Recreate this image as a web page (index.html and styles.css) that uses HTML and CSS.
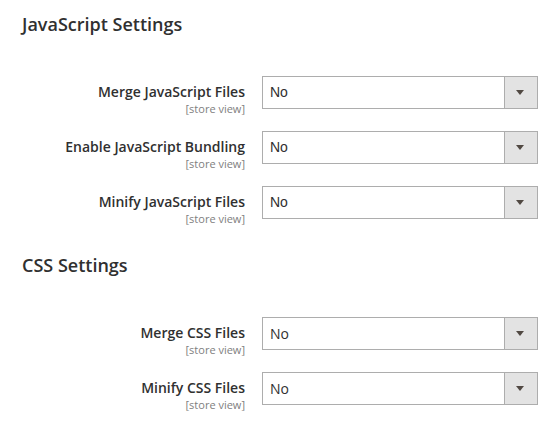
FILE: index.html
```
<!DOCTYPE html>
<html lang="en">
<head>
	<meta charset="UTF-8" />
	<meta name="viewport" content="width=device-width, initial-scale=1" />
	<title>Developer settings</title>
	<link rel="stylesheet" href="styles.css">
</head>
<body>
	<div class="section">
		<h2 class="section_title">JavaScript Settings</h2>
		<div class="row">
			<div class="label">
				<div class="label_text">Merge JavaScript Files</div>
				<div class="scope">[store view]</div>
			</div>
			<div class="select select--js">
				<span class="value">No</span>
				<span class="arrow"></span>
			</div>
		</div>
		<div class="row">
			<div class="label">
				<div class="label_text">Enable JavaScript Bundling</div>
				<div class="scope">[store view]</div>
			</div>
			<div class="select select--js">
				<span class="value">No</span>
				<span class="arrow"></span>
			</div>
		</div>
		<div class="row">
			<div class="label">
				<div class="label_text">Minify JavaScript Files</div>
				<div class="scope">[store view]</div>
			</div>
			<div class="select select--js">
				<span class="value">No</span>
				<span class="arrow"></span>
			</div>
		</div>
	</div>
	<div class="section">
		<h2 class="section_title">CSS Settings</h2>
		<div class="row">
			<div class="label">
				<div class="label_text">Merge CSS Files</div>
				<div class="scope">[store view]</div>
			</div>
			<div class="select">
				<span class="value">No</span>
				<span class="arrow"></span>
			</div>
		</div>
		<div class="row">
			<div class="label">
				<div class="label_text">Minify CSS Files</div>
				<div class="scope">[store view]</div>
			</div>
			<div class="select">
				<span class="value">No</span>
				<span class="arrow"></span>
			</div>
		</div>
	</div>
</body>
</html>
```

FILE: styles.css
```
body{
	margin: 0;
	background-color: #fff;
	font-family: "Open Sans", sans-serif;
	color: #303030;
}

.section{
	padding-top: 12px;
}

.section_title{
	margin: 0 0 40px 22px;
	font-size: 18px;
	line-height: 24px;
	font-weight: 600;
	color: #303030;
}

.row{
	display: grid;
	grid-template-columns: 245px 276px;
	column-gap: 17px;
	align-items: start;
	margin-bottom: 16px;
}

.label{
	text-align: right;
	padding-top: 6px;
}

.label_text{
	font-size: 14px;
	line-height: 20px;
	font-weight: 600;
}

.scope{
	font-size: 11px;
	line-height: 13px;
	color: #808080;
}

.select{
	display: flex;
	height: 33px;
	box-sizing: border-box;
	border: 1px solid #adadad;
	background-color: #fff;
}

.value{
	flex: 1;
	padding-left: 7px;
	font-size: 14px;
	line-height: 31px;
}

.select--js .value{
	font-family: "Liberation Sans", Arial, sans-serif;
}

.arrow{
	position: relative;
	width: 32px;
	border-left: 1px solid #adadad;
	background-color: #e3e3e3;
}

.arrow::after{
	content: "";
	position: absolute;
	left: 11px;
	top: 13px;
	border-style: solid;
	border-width: 5px 4px 0 4px;
	border-color: #514943 transparent transparent transparent;
}
```
